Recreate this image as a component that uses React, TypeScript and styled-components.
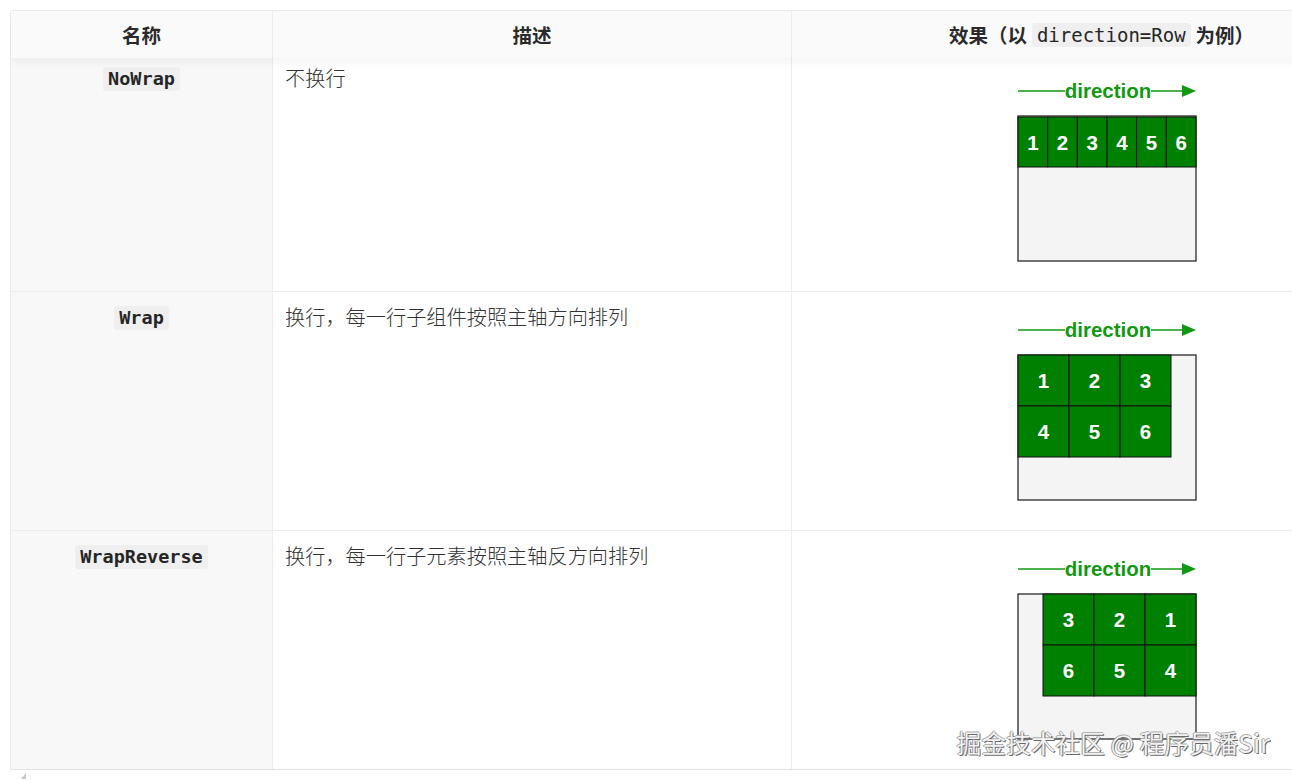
import { createGlobalStyle } from 'styled-components';
import styled from 'styled-components';

const GlobalStyle = createGlobalStyle`
  html, body {
    margin: 0;
    padding: 0;
    background: #ffffff;
    font-family: "Noto Sans CJK SC", "Noto Sans", sans-serif;
    color: #333;
  }
`;

const Page = styled.div`
  position: relative;
  width: 1292px;
  height: 780px;
  overflow: hidden;
  padding: 10px 0 0 10px;
  box-sizing: border-box;
`;

const Scroller = styled.div`
  width: 1282px;
  overflow: hidden;
`;

const Table = styled.div`
  width: 1401px;
  border-top: 1px solid #ececec;
  border-left: 1px solid #ececec;
  border-bottom: 1px solid #e4e4e4;
  box-sizing: border-box;
`;

const HeadRow = styled.div`
  position: relative;
  z-index: 1;
  display: grid;
  grid-template-columns: 262px 519px 620px;
  height: 47px;
  background: #fafafa;
  box-shadow: 0 5px 8px rgba(0, 0, 0, 0.045);
`;

const HeadCell = styled.div`
  display: flex;
  align-items: center;
  justify-content: center;
  font-size: 19.5px;
  font-weight: 700;
  color: #2a2a2a;
  border-right: 1px solid #ececec;
  white-space: nowrap;
`;

const Body = styled.div`
  margin-top: -5px;
`;

const Row = styled.div`
  display: grid;
  grid-template-columns: 262px 519px 620px;
  border-top: 1px solid #ececec;
  &:first-child {
    border-top: none;
  }
`;

const NameCell = styled.div`
  background: #f8f8f8;
  border-right: 1px solid #ececec;
  padding: 14px 12px;
  display: flex;
  justify-content: center;
  align-items: flex-start;
`;

const DescCell = styled.div`
  border-right: 1px solid #ececec;
  padding: 13px 12px 14px;
  font-size: 20.2px;
  font-weight: 300;
  line-height: 24px;
  color: #333;
`;

const ImageCell = styled.div`
  padding: 14px 12px;
  display: flex;
  justify-content: center;
`;

const Code = styled.code<{ $head?: boolean }>`
  font-family: "DejaVu Sans Mono", "Liberation Mono", monospace;
  font-size: ${(p) => (p.$head ? '19px' : '18.5px')};
  font-weight: ${(p) => (p.$head ? 400 : 700)};
  line-height: 24px;
  background: #efefef;
  color: #262626;
  border-radius: 3px;
  padding: 0 5px;
  margin: ${(p) => (p.$head ? '0 5px' : '0')};
`;

const Watermark = styled.div`
  position: absolute;
  right: 22px;
  bottom: 20px;
  font-family: "Noto Sans CJK SC", "Noto Sans", sans-serif;
  font-size: 24.5px;
  color: #f2f2f2;
  text-shadow: 1px 1px 0 #6a6a6a, -1px 0 0 #9a9a9a, 0 -1px 0 #b0b0b0;
  letter-spacing: 0.2px;
  white-space: nowrap;
`;

const Corner = styled.div`
  height: 12px;
  padding-left: 10px;
  display: flex;
  align-items: center;
`;

const GREEN = '#008000';
const ARROW = '#119a11';

type Layout = 'nowrap' | 'wrap' | 'reverse';

const Diagram = ({ layout }: { layout: Layout }) => {
  const bx = 16;
  const by = 49;
  const bw = 178;
  const bh = 145;
  let cells: { x: number; y: number; w: number; h: number; n: number }[] = [];
  if (layout === 'nowrap') {
    const w = bw / 6;
    cells = [1, 2, 3, 4, 5, 6].map((n, i) => ({ x: bx + i * w, y: by + 1, w, h: 50, n }));
  } else if (layout === 'wrap') {
    cells = [1, 2, 3, 4, 5, 6].map((n, i) => ({
      x: bx + (i % 3) * 51,
      y: by + Math.floor(i / 3) * 51,
      w: 51,
      h: 51,
      n,
    }));
  } else {
    const order = [3, 2, 1, 6, 5, 4];
    cells = order.map((n, i) => ({
      x: bx + bw - 153 + (i % 3) * 51,
      y: by + Math.floor(i / 3) * 51,
      w: 51,
      h: 51,
      n,
    }));
  }
  return (
    <svg width="200" height="210" viewBox="0 0 200 210">
      <line x1="16" y1="24" x2="63" y2="24" stroke={ARROW} strokeWidth="1.5" />
      <text
        x="106"
        y="31"
        textAnchor="middle"
        fontFamily="'Liberation Sans', Arial, sans-serif"
        fontWeight="700"
        fontSize="20.5"
        fill={ARROW}
      >
        direction
      </text>
      <line x1="149" y1="24" x2="183" y2="24" stroke={ARROW} strokeWidth="1.5" />
      <polygon points="180,18 194,24 180,30" fill={ARROW} />
      <rect x={bx} y={by} width={bw} height={bh} fill="#f4f4f4" stroke="#2a2a2a" strokeWidth="1.3" />
      {cells.map((c) => (
        <g key={c.n}>
          <rect x={c.x} y={c.y} width={c.w} height={c.h} fill={GREEN} stroke="#111" strokeWidth="1" />
          <text
            x={c.x + c.w / 2}
            y={c.y + c.h / 2 + 7.5}
            textAnchor="middle"
            fontFamily="'Liberation Sans', Arial, sans-serif"
            fontWeight="700"
            fontSize="20.5"
            fill="#ffffff"
          >
            {c.n}
          </text>
        </g>
      ))}
    </svg>
  );
};

const rows: { name: string; desc: string; layout: Layout }[] = [
  { name: 'NoWrap', desc: '不换行', layout: 'nowrap' },
  { name: 'Wrap', desc: '换行，每一行子组件按照主轴方向排列', layout: 'wrap' },
  { name: 'WrapReverse', desc: '换行，每一行子元素按照主轴反方向排列', layout: 'reverse' },
];

export default function App() {
  return (
    <>
      <GlobalStyle />
      <Page>
        <Scroller>
          <Table>
            <HeadRow>
              <HeadCell>名称</HeadCell>
              <HeadCell>描述</HeadCell>
              <HeadCell>
                效果（以<Code $head>direction=Row</Code>为例）
              </HeadCell>
            </HeadRow>
            <Body>
              {rows.map((r) => (
                <Row key={r.name}>
                  <NameCell>
                    <Code>{r.name}</Code>
                  </NameCell>
                  <DescCell>{r.desc}</DescCell>
                  <ImageCell>
                    <Diagram layout={r.layout} />
                  </ImageCell>
                </Row>
              ))}
            </Body>
          </Table>
        </Scroller>
        <Corner>
          <svg width="8" height="8" viewBox="0 0 8 8">
            <polygon points="6,1 6,7 1,7" fill="#c8c8c8" />
          </svg>
        </Corner>
        <Watermark>掘金技术社区 @ 程序员潘Sir</Watermark>
      </Page>
    </>
  );
}
